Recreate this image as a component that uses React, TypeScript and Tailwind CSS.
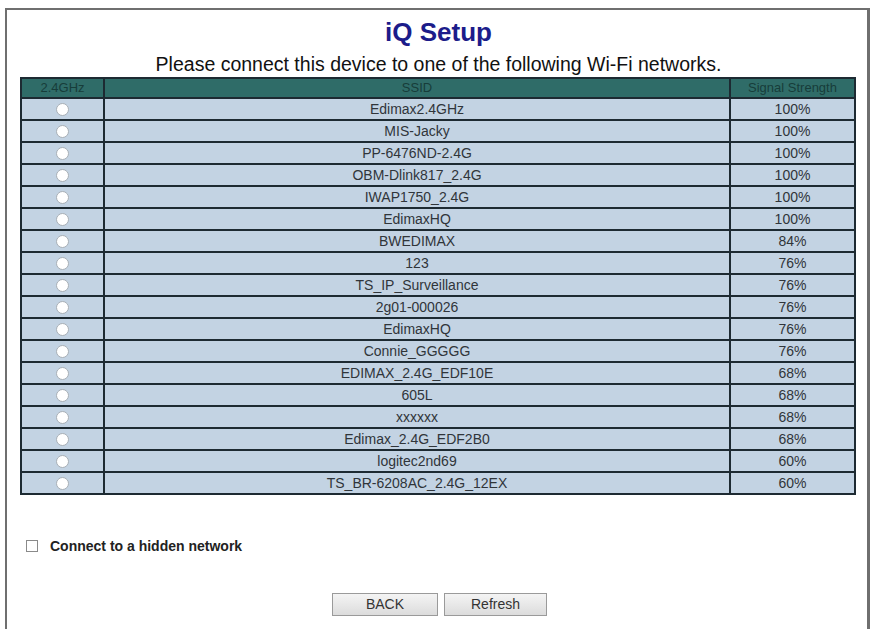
import React, { useState } from "react";

type Network = { ssid: string; signal: string };

const networks: Network[] = [
  { ssid: "Edimax2.4GHz", signal: "100%" },
  { ssid: "MIS-Jacky", signal: "100%" },
  { ssid: "PP-6476ND-2.4G", signal: "100%" },
  { ssid: "OBM-Dlink817_2.4G", signal: "100%" },
  { ssid: "IWAP1750_2.4G", signal: "100%" },
  { ssid: "EdimaxHQ", signal: "100%" },
  { ssid: "BWEDIMAX", signal: "84%" },
  { ssid: "123", signal: "76%" },
  { ssid: "TS_IP_Surveillance", signal: "76%" },
  { ssid: "2g01-000026", signal: "76%" },
  { ssid: "EdimaxHQ", signal: "76%" },
  { ssid: "Connie_GGGGG", signal: "76%" },
  { ssid: "EDIMAX_2.4G_EDF10E", signal: "68%" },
  { ssid: "605L", signal: "68%" },
  { ssid: "xxxxxx", signal: "68%" },
  { ssid: "Edimax_2.4G_EDF2B0", signal: "68%" },
  { ssid: "logitec2nd69", signal: "60%" },
  { ssid: "TS_BR-6208AC_2.4G_12EX", signal: "60%" },
];

function Radio({ checked, onClick }: { checked: boolean; onClick: () => void }) {
  return (
    <button
      type="button"
      onClick={onClick}
      className="mx-auto flex h-[13px] w-[13px] items-center justify-center rounded-full border border-[#a8afb6] bg-white"
    >
      {checked && <span className="h-[5px] w-[5px] rounded-full bg-[#333]" />}
    </button>
  );
}

export default function App() {
  const [selected, setSelected] = useState<number | null>(null);
  const [hidden, setHidden] = useState(false);

  return (
    <div className="h-[629px] w-[871px] overflow-hidden bg-white pl-[5px] pt-[8px] font-['Liberation_Sans',Arial,sans-serif]">
      <div className="flex h-[640px] w-[865px] flex-col border-2 border-r-[3px] border-[#6f6f6f] border-b-0 pl-[13px] pr-[10px]">
        <h1 className="mt-[6px] text-center text-[26px] font-bold leading-[32px] text-[#1c1c8a]">iQ Setup</h1>
        <p className="mt-[6px] text-center text-[19.5px] leading-[20px] text-[#111]">
          Please connect this device to one of the following Wi-Fi networks.
        </p>

        <table className="mt-[3px] w-[836px] table-fixed border-collapse border-2 border-[#1d2a32] text-center text-[14px] text-[#30353a]">
          <colgroup>
            <col className="w-[83px]" />
            <col />
            <col className="w-[125px]" />
          </colgroup>
          <thead>
            <tr className="h-[20px] bg-[#2f6c68] text-[13px] font-normal leading-[16px] text-[#173d3a]">
              <th className="border-2 border-[#1d2a32] font-normal">2.4GHz</th>
              <th className="border-2 border-[#1d2a32] font-normal">SSID</th>
              <th className="border-2 border-[#1d2a32] font-normal">Signal Strength</th>
            </tr>
          </thead>
          <tbody>
            {networks.map((n, i) => (
              <tr key={i} className="h-[22px] bg-[#c3d3e3] leading-[16px]">
                <td className="border-2 border-[#1d2a32]">
                  <Radio checked={selected === i} onClick={() => setSelected(i)} />
                </td>
                <td className="border-2 border-[#1d2a32]">{n.ssid}</td>
                <td className="border-2 border-[#1d2a32] border-l-[1px] border-l-[#3b4a55]">{n.signal}</td>
              </tr>
            ))}
          </tbody>
        </table>

        <label className="mt-[42px] flex cursor-pointer items-center gap-[12px] pl-[6px] text-[14px] font-bold leading-[18px] text-[#222]">
          <input
            type="checkbox"
            checked={hidden}
            onChange={(e) => setHidden(e.target.checked)}
            className="h-[12px] w-[12px] appearance-none border border-[#8a8a8a] bg-white checked:bg-[#555]"
          />
          Connect to a hidden network
        </label>

        <div className="mt-[38px] flex justify-center gap-[6px] pl-[2px]">
          <button className="h-[23px] w-[106px] border border-[#9a9a9a] bg-gradient-to-b from-[#f4f4f4] to-[#dcdcdc] text-[14px] text-[#333]">
            BACK
          </button>
          <button className="h-[23px] w-[103px] border border-[#9a9a9a] bg-gradient-to-b from-[#f4f4f4] to-[#dcdcdc] text-[14px] text-[#333]">
            Refresh
          </button>
        </div>
      </div>
    </div>
  );
}
